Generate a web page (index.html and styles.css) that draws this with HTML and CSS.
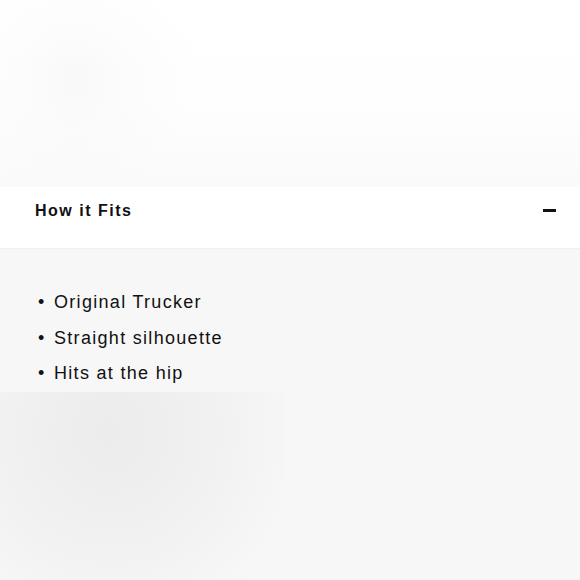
FILE: index.html
```html
<!DOCTYPE html>
<html lang="en">
<head>
<meta charset="utf-8">
<title>How it Fits</title>
<link rel="stylesheet" href="styles.css">
</head>
<body>
<div class="page">
  <div class="hero"></div>
  <div class="acc-header">
    <h2 class="acc-title">How it Fits</h2>
    <span class="acc-toggle" aria-hidden="true"></span>
  </div>
  <div class="acc-body">
    <ul class="fit-list">
      <li>Original Trucker</li>
      <li>Straight silhouette</li>
      <li>Hits at the hip</li>
    </ul>
  </div>
  <div class="below">
    <div class="below-shade"></div>
  </div>
</div>
</body>
</html>
```

FILE: styles.css
```css
html, body {
  margin: 0;
  padding: 0;
  height: 100%;
}
body {
  font-family: "Liberation Sans", Arial, sans-serif;
  color: #111;
  background: #f7f7f7;
}
.page {
  display: flex;
  flex-direction: column;
  height: 580px;
  overflow: hidden;
}
.hero {
  height: 187px;
  flex: none;
  background:
    radial-gradient(circle at 75px 80px, rgba(238,238,238,0.35) 0, rgba(242,242,242,0.2) 50px, rgba(255,255,255,0) 120px),
    linear-gradient(to bottom, #ffffff 0%, #fefefe 55%, #fafafa 100%);
}
.acc-header {
  height: 62px;
  flex: none;
  box-sizing: border-box;
  background: #fff;
  border-bottom: 1px solid #f0f0f0;
  display: flex;
  align-items: center;
  justify-content: space-between;
  padding: 0 24px 14px 35px;
}
.acc-title {
  margin: 0;
  font-size: 16px;
  font-weight: 700;
  letter-spacing: 1.5px;
  color: #111;
}
.acc-toggle {
  width: 13px;
  height: 3px;
  background: #111;
  display: block;
}
.acc-body {
  flex: none;
  background: #f7f7f7;
  padding: 36px 0 0 0;
}
.fit-list {
  list-style: none;
  margin: 0;
  padding: 0 0 0 38px;
}
.fit-list li {
  font-size: 18px;
  line-height: 35.5px;
  letter-spacing: 1.3px;
  color: #111;
  display: flex;
}
.fit-list li::before {
  content: "\2022";
  width: 16px;
  flex: none;
  letter-spacing: 0;
}
.below {
  flex: 1;
  background: #f7f7f7;
  display: flex;
}
.below-shade {
  width: 285px;
  background:
    radial-gradient(ellipse 190px 200px at 110px 40px, #ececec 0, #eeeeee 50px, #f2f2f2 120px, #f7f7f7 190px);
}
```
